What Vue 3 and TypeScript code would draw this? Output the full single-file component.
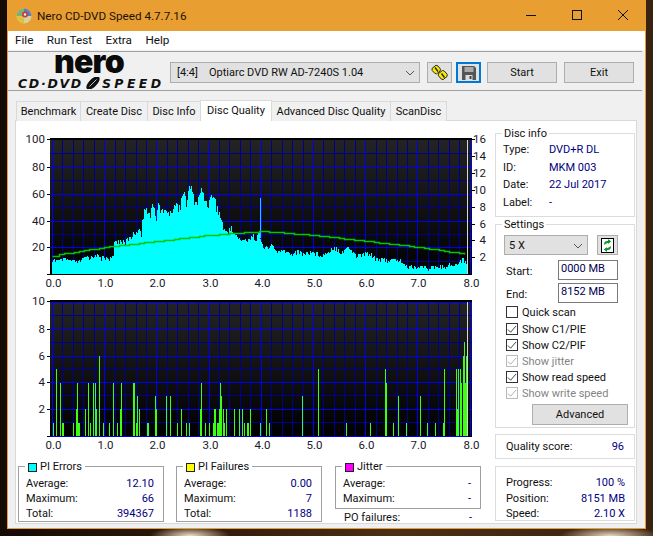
<script setup lang="ts">
type P = [number, number]

const menus = ['File', 'Run Test', 'Extra', 'Help']
const tabs = ['Benchmark', 'Create Disc', 'Disc Info', 'Disc Quality', 'Advanced Disc Quality', 'ScanDisc']

const x0 = 52
const unitX = 52.2
const major = [0, 1, 2, 3, 4, 5, 6, 7, 8].map((v) => Math.round(x0 + v * unitX) + 0.5)
const minorX: number[] = []
for (let i = 0; i <= 40; i++) if (i % 5) minorX.push(Math.round(x0 + i * 10.44) + 0.5)

function lerp(pts: P[], x: number): number {
  for (let i = 1; i < pts.length; i++) {
    if (x <= pts[i][0]) {
      const [a, b] = pts[i - 1]
      const [c, d] = pts[i]
      return b + ((d - b) * (x - a)) / Math.max(c - a, 0.01)
    }
  }
  return pts[pts.length - 1][1]
}

const zoomA: P[] = [
  [125, 403], [135, 398], [145, 405], [160, 398], [185, 404], [205, 408], [215, 402], [230, 392], [250, 393], [258, 380], [270, 394],
  [300, 394], [311, 393], [312, 346], [340, 342], [345, 356], [350, 338], [365, 332], [370, 320], [380, 322], [385, 305], [395, 322],
  [397, 272], [410, 230], [414, 250], [420, 262], [430, 230], [440, 265], [445, 230], [460, 258], [470, 244], [480, 262], [490, 236],
  [500, 232], [510, 238], [520, 186], [530, 226], [537, 182], [545, 182], [550, 205], [560, 230], [575, 186], [590, 226], [598, 222],
  [610, 196], [620, 236], [630, 262], [640, 298], [650, 318], [665, 293], [670, 318], [685, 336], [700, 344], [720, 342], [740, 328], [750, 312],
]
const zoomB: P[] = [
  [0, 336], [10, 328], [20, 336], [28, 313], [33, 348], [45, 360], [55, 368], [67, 354], [75, 372], [90, 378], [105, 372], [120, 384],
  [145, 374], [165, 384], [180, 376], [220, 386], [250, 364], [265, 366], [275, 380], [290, 364], [300, 366], [320, 388], [360, 379],
  [378, 396], [410, 401], [450, 401], [470, 420], [550, 423], [600, 415], [625, 415], [640, 391], [645, 406], [652, 406],
]
const envelope: P[] = [
  ...zoomA.map(([x, y]): P => [10 + x / 3, 125 + y / 3]).filter(([x]) => x < 250),
  ...zoomB.map(([x, y]): P => [250 + x / 3, 125 + y / 3]),
]
function noise(i: number): number {
  const s = Math.sin(i * 12.9898) * 43758.5453
  return s - Math.floor(s)
}
let piePath = ''
for (let x = 52; x < 467; x++) {
  const dense = x > 140 && x < 235
  const n = noise(x)
  const amp = dense ? 9 : x < 120 ? 5 : 5
  const top = Math.min(273, Math.round(lerp(envelope, x + 0.5) + n * n * amp))
  piePath += `M${x} 274V${top}h1V274z`
}

const speedPts: P[] = [
  [52, 256], [60, 254], [104, 247], [156, 241], [208, 235], [261, 231], [275, 232], [313, 235], [365, 241], [418, 247], [465, 254],
]
let speedPath = 'M52.5 256.5'
for (let x = 54; x <= 465; x += 5) {
  speedPath += `H${x}.5V${Math.round(lerp(speedPts, x))}.5`
}

const yLeftA = [
  { v: '100', y: 139 }, { v: '80', y: 167 }, { v: '60', y: 194 }, { v: '40', y: 221 }, { v: '20', y: 247 },
]
const yRightA = [16, 14, 12, 10, 8, 6, 4, 2].map((v, i) => ({ v, y: Math.round(139 + i * 16.9) }))
const hMajorA = [167, 194, 221, 247]
const hMinorA = [153, 180, 207, 234, 261]
const yLeftB = [
  { v: '10', y: 301 }, { v: '8', y: 329 }, { v: '6', y: 356 }, { v: '4', y: 382 }, { v: '2', y: 409 },
]
const hMajorB = [302, 329, 356, 382, 409]
const hMinorB = [315, 342, 369, 395, 422]

const barsZ1: [number, number, number?][] = [
  [130, 1], [139, 5], [151, 4], [158, 1, 2], [190, 1], [200, 2, 2], [202, 4], [205, 1, 2], [226, 2], [235, 4], [241, 1], [250, 4], [256, 4],
  [259, 2], [268, 6], [280, 1], [298, 1], [310, 4], [322, 1], [332, 2, 2], [334, 4], [371, 4, 2], [379, 1, 2], [382, 3], [388, 2], [413, 1, 2],
  [436, 3], [438, 2], [469, 3], [481, 3], [502, 1], [514, 2], [529, 1], [538, 1], [571, 2], [574, 4], [586, 1], [598, 1], [610, 1, 2], [613, 2, 2],
  [622, 1, 3], [628, 2, 2], [631, 4], [634, 3], [640, 2], [643, 1], [649, 2], [673, 2], [688, 2], [697, 2], [703, 1], [712, 1, 2], [721, 2],
]
const barsZ2: [number, number, number?][] = [
  [31, 1], [49, 2], [58, 1], [157, 3], [205, 5], [289, 1], [361, 1], [406, 5], [409, 4], [430, 1], [445, 3], [469, 1], [511, 3], [532, 1], [556, 1],
  [580, 1, 2], [583, 5], [619, 5], [621, 2, 2], [625, 5], [631, 5], [634, 4], [640, 6, 2], [643, 7], [646, 4, 2], [649, 6], [652, 2],
]
const uy = 13.37
const c2Bars = [
  ...barsZ1.map(([x, v, w]) => ({ x: 10 + x / 3 - 0.5, v, w: w ?? 1 })),
  ...barsZ2.map(([x, v, w]) => ({ x: 250 + x / 3 - 0.5, v, w: w ?? 1 })),
]
let pifPath = ''
for (const b of c2Bars) {
  pifPath += `M${Math.round(b.x)} 436V${Math.round(436 - b.v * uy)}h${b.w}V436z`
}

const stats = [
  { title: 'PI Errors', color: '#00ffff', avg: '12.10', max: '66', total: '394367' },
  { title: 'PI Failures', color: '#ffff00', avg: '0.00', max: '7', total: '1188' },
]
const discInfo = [
  ['Type:', 'DVD+R DL'],
  ['ID:', 'MKM 003'],
  ['Date:', '22 Jul 2017'],
  ['Label:', '-'],
]
const checks = [
  { label: 'Show C1/PIE', on: true, off: false },
  { label: 'Show C2/PIF', on: true, off: false },
  { label: 'Show jitter', on: true, off: true },
  { label: 'Show read speed', on: true, off: false },
  { label: 'Show write speed', on: true, off: true },
]
const progress = [
  ['Progress:', '100 %'],
  ['Position:', '8151 MB'],
  ['Speed:', '2.10 X'],
]
</script>

<template>
  <div class="page">
    <div class="window">
      <header class="titlebar">
        <svg class="app-icon" width="16" height="16" viewBox="0 0 16 16">
          <circle cx="8" cy="8" r="7.5" fill="#d8d0a0" />
          <path d="M8 .5A7.5 7.5 0 0 1 15.5 8H8z" fill="#5a7fc0" />
          <path d="M.5 8A7.5 7.5 0 0 1 8 .5V8z" fill="#7fb070" />
          <path d="M8 15.5A7.5 7.5 0 0 1 .5 8H8z" fill="#e0c040" />
          <circle cx="9" cy="6.5" r="3" fill="#c04040" />
          <circle cx="9" cy="6.5" r="1.2" fill="#eee" />
        </svg>
        <span class="title-text">Nero CD-DVD Speed 4.7.7.16</span>
        <div class="win-controls">
          <svg width="46" height="31" viewBox="0 0 46 31"><path d="M18 15.5h10" stroke="#111" fill="none" /></svg>
          <svg width="46" height="31" viewBox="0 0 46 31"><rect x="18.5" y="10.5" width="9" height="9" stroke="#111" fill="none" /></svg>
          <svg width="46" height="31" viewBox="0 0 46 31"><path d="M18 10l10 10M28 10L18 20" stroke="#111" fill="none" /></svg>
        </div>
      </header>

      <nav class="menubar">
        <span v-for="m in menus" :key="m" class="menu-item">{{ m }}</span>
      </nav>

      <section class="toolbar">
        <div class="logo">
          <div class="logo-nero">nero</div>
          <div class="logo-line">
            <span class="logo-cd">CD·DVD</span>
            <svg width="16" height="12" viewBox="0 0 16 12">
              <ellipse cx="8" cy="6" rx="8.5" ry="4" transform="rotate(-45 8 6)" fill="#111" />
              <path d="M4.5 9.5L11.5 2.5" stroke="#eee" stroke-width="0.8" />
            </svg>
            <span class="logo-speed">SPEED</span>
          </div>
        </div>
        <div class="combo drive">
          <span class="drive-id">[4:4]</span>
          <span>Optiarc DVD RW AD-7240S 1.04</span>
          <svg class="chev" width="10" height="6" viewBox="0 0 10 6"><path d="M1 1l4 4 4-4" stroke="#555" fill="none" /></svg>
        </div>
        <button class="tool-btn">
          <svg width="17" height="17" viewBox="0 0 17 17">
            <path d="M1 4.5L5 1.2l2 .8 2.5 3.2-.5 2-3.5 2.6-1.6-.4L1.2 6.5z" fill="#f7ea10" stroke="#2a2a10" stroke-width="1" />
            <path d="M7.5 9.5l4-3 1.8.5 3 3.5-.3 2-3.8 3-1.8-.3-3-3.5z" fill="#f7ea10" stroke="#2a2a10" stroke-width="1" />
            <path d="M4 3.5l3 4M10.5 9.5l3 4" stroke="#2a2a10" stroke-width="1.4" />
          </svg>
        </button>
        <button class="tool-btn save">
          <svg width="14" height="14" viewBox="0 0 14 14">
            <path d="M0 0h12l2 2v12H0z" fill="#555" />
            <rect x="2.5" y="1" width="9" height="5" fill="#aaa" />
            <rect x="3.5" y="9" width="7" height="5" fill="#ddd" />
            <rect x="7.5" y="10" width="2" height="3" fill="#444" />
          </svg>
        </button>
        <button class="wide-btn start">Start</button>
        <button class="wide-btn">Exit</button>
      </section>

      <div class="tabs">
        <div v-for="t in tabs" :key="t" class="tab" :class="{ active: t === 'Disc Quality' }">{{ t }}</div>
      </div>

      <main class="panel">
        <div class="left-col">
          <svg class="chart" width="479" height="167" viewBox="16 125 479 167">
            <defs>
              <linearGradient id="plotBg" x1="0" y1="0" x2="0" y2="1">
                <stop offset="0" stop-color="#242424" />
                <stop offset="1" stop-color="#000" />
              </linearGradient>
            </defs>
            <rect x="50" y="138" width="422" height="137" fill="url(#plotBg)" />
            <rect x="50" y="138" width="422" height="2" fill="#000" />
            <path v-for="x in minorX" :key="x" :d="`M${x} 140V274`" stroke="#000090" fill="none" />
            <path v-for="y in hMinorA" :key="y" :d="`M50 ${y + 0.5}H472`" stroke="#000090" fill="none" />
            <path v-for="x in major" :key="x" :d="`M${x} 140V274`" stroke="#0000f0" fill="none" />
            <path v-for="y in hMajorA" :key="y" :d="`M50 ${y + 0.5}H472`" stroke="#0000f0" fill="none" />
            <path :d="piePath" fill="#00ffff" />
            <rect x="260" y="198" width="1" height="40" fill="#20c8f0" />
            <path :d="speedPath" stroke="#00c800" stroke-width="1.5" fill="none" />
            <path d="M467.5 140V274" stroke="#d8d8d8" fill="none" />
            <g v-for="t in yLeftA" :key="t.v">
              <path :d="`M47 ${t.y + 0.5}h3`" stroke="#000" fill="none" />
              <text class="axis" x="45" :y="t.y + 4" text-anchor="end">{{ t.v }}</text>
            </g>
            <path d="M47 274.5h3" stroke="#000" fill="none" />
            <g v-for="t in yRightA" :key="t.v">
              <path :d="`M472 ${t.y + 0.5}h3`" stroke="#000" fill="none" />
              <text class="axis" x="486" :y="t.y + 4" text-anchor="end">{{ t.v }}</text>
            </g>
            <text v-for="(x, i) in major" :key="x" class="axis" :x="x + 1" y="287" text-anchor="middle">{{ i.toFixed(1) }}</text>
          </svg>

          <svg class="chart" width="479" height="160" viewBox="16 292 479 160">
            <rect x="50" y="300" width="422" height="137" fill="url(#plotBg)" />
            <rect x="50" y="300" width="422" height="2" fill="#000" />
            <path v-for="x in minorX" :key="x" :d="`M${x} 302V436`" stroke="#000090" fill="none" />
            <path v-for="y in hMinorB" :key="y" :d="`M50 ${y + 0.5}H472`" stroke="#000090" fill="none" />
            <path v-for="x in major" :key="x" :d="`M${x} 302V436`" stroke="#0000f0" fill="none" />
            <path v-for="y in hMajorB" :key="y" :d="`M50 ${y + 0.5}H472`" stroke="#0000f0" fill="none" />
            <path d="M50 436.5H468" stroke="#0000f0" fill="none" />
            <path :d="pifPath" fill="#3cff14" />
            <path d="M467.5 302V436" stroke="#d8d8d8" fill="none" />
            <g v-for="t in yLeftB" :key="t.v">
              <path :d="`M47 ${t.y + 0.5}h3`" stroke="#000" fill="none" />
              <text class="axis" x="45" :y="t.y + 4" text-anchor="end">{{ t.v }}</text>
            </g>
            <path d="M47 436.5h3" stroke="#000" fill="none" />
            <text v-for="(x, i) in major" :key="x" class="axis" :x="x + 1" y="449" text-anchor="middle">{{ i.toFixed(1) }}</text>
          </svg>

          <div class="stats">
            <div v-for="s in stats" :key="s.title" class="stat-box">
              <div class="legend"><i class="swatch" :style="{ background: s.color }"></i>{{ s.title }}</div>
              <div class="row"><span>Average:</span><b>{{ s.avg }}</b></div>
              <div class="row"><span>Maximum:</span><b>{{ s.max }}</b></div>
              <div class="row"><span>Total:</span><b>{{ s.total }}</b></div>
            </div>
            <div class="jitter-col">
              <div class="stat-box jitter">
                <div class="legend"><i class="swatch magenta"></i>Jitter</div>
                <div class="row"><span>Average:</span><b>-</b></div>
                <div class="row"><span>Maximum:</span><b>-</b></div>
              </div>
              <div class="row po"><span>PO failures:</span><b>-</b></div>
            </div>
          </div>
        </div>

        <aside class="right-col">
          <div class="group disc-info">
            <div class="legend plain">Disc info</div>
            <div v-for="d in discInfo" :key="d[0]" class="info-row">
              <span>{{ d[0] }}</span><b>{{ d[1] }}</b>
            </div>
          </div>

          <div class="group settings">
            <div class="legend plain">Settings</div>
            <div class="speed-row">
              <div class="combo speed">
                <span>5 X</span>
                <svg class="chev" width="10" height="6" viewBox="0 0 10 6"><path d="M1 1l4 4 4-4" stroke="#555" fill="none" /></svg>
              </div>
              <button class="refresh">
                <svg width="13" height="15" viewBox="0 0 13 15">
                  <rect x="0.5" y="0.5" width="12" height="14" fill="#fff" stroke="#000" />
                  <path d="M9.5 3.5H5.5Q3.5 3.5 3.5 6.5M9.5 3.5L7.5 1.8V5.2z" stroke="#0a9a2a" fill="#0a9a2a" />
                  <path d="M3.5 11.5H7.5Q9.5 11.5 9.5 8.5M3.5 11.5L5.5 9.8V13.2z" stroke="#0a9a2a" fill="#0a9a2a" />
                </svg>
              </button>
            </div>
            <div class="field"><label>Start:</label><div class="input">0000 MB</div></div>
            <div class="field end"><label>End:</label><div class="input">8152 MB</div></div>
            <div class="check first">
              <span class="box"></span><span>Quick scan</span>
            </div>
            <div v-for="c in checks" :key="c.label" class="check" :class="{ disabled: c.off }">
              <span class="box">
                <svg width="11" height="11" viewBox="0 0 11 11"><path d="M1 5.5l3 3 6-7" stroke="currentColor" stroke-width="1" fill="none" /></svg>
              </span>
              <span>{{ c.label }}</span>
            </div>
            <button class="advanced">Advanced</button>
          </div>

          <div class="group quality">
            <span>Quality score:</span><b>96</b>
          </div>

          <div class="group progress">
            <div v-for="p in progress" :key="p[0]" class="row"><span>{{ p[0] }}</span><b>{{ p[1] }}</b></div>
          </div>
        </aside>
      </main>
    </div>
  </div>
</template>

<style>
html, body { margin: 0; padding: 0; background: #1a0f06; }
</style>

<style scoped>
.page {
  width: 653px;
  height: 536px;
  box-sizing: border-box;
  padding: 0 7px 7px 7px;
  overflow: hidden;
  display: flex;
  font-family: Roboto, sans-serif;
  font-size: 11px;
  color: #111;
  background:
    radial-gradient(ellipse 40px 10px at 190px 536px, #f0e0c8, transparent),
    radial-gradient(ellipse 50px 10px at 610px 536px, #e8d8c0, transparent),
    linear-gradient(90deg, #150b05 0, #2c1a0a 30%, #4a3015 60%, #3a2210 100%);
}
.window {
  flex: 1;
  display: flex;
  flex-direction: column;
  background: #f0f0f0;
  border: 1px solid #e89e30;
  border-top: 0;
  min-width: 0;
}
.titlebar {
  height: 31px;
  flex: none;
  background: #e89e30;
  display: flex;
  align-items: center;
  padding-left: 8px;
}
.title-text { margin-left: 5px; font-size: 11.7px; color: #1a1208; }
.win-controls { margin-left: auto; display: flex; align-items: center; margin-right: -1px; }
.menubar {
  height: 19px;
  flex: none;
  background: #fff;
  display: flex;
  align-items: center;
  padding-left: 7px;
  gap: 13.5px;
  font-size: 11.7px;
}
.menu-item { line-height: 19px; }
.toolbar {
  margin-top: 1px;
  margin-right: 3px;
  height: 38px;
  flex: none;
  border-top: 1px solid #a0a0a0;
  border-bottom: 1px solid #a0a0a0;
  display: flex;
  align-items: flex-start;
  padding-left: 10px;
}
.logo { width: 152px; flex: none; padding-top: 1px; }
.logo-nero {
  font: 900 32px/17px Inter, sans-serif;
  letter-spacing: -0.8px;
  color: #0a0a0a;
  margin-left: 36px;
}
.logo-line {
  margin-top: 7px;
  display: flex;
  align-items: center;
  font: italic 700 12.5px/11px "DejaVu Sans", sans-serif;
  letter-spacing: 1.7px;
  color: #111;
}
.logo-cd { margin-right: 2px; }
.logo-speed { letter-spacing: 3.4px; margin-left: 1px; }
.combo {
  box-sizing: border-box;
  background: #e1e1e1;
  border: 1px solid #adadad;
  display: flex;
  align-items: center;
  position: relative;
}
.drive {
  width: 250px;
  height: 21px;
  margin-top: 10px;
  padding-left: 6px;
}
.drive-id { width: 32px; flex: none; }
.chev { position: absolute; right: 4px; top: 7px; }
.tool-btn {
  width: 25px;
  height: 21px;
  margin: 10px 0 0 7px;
  padding: 0;
  box-sizing: border-box;
  border: 1px solid #adadad;
  background: #e1e1e1;
  display: flex;
  align-items: center;
  justify-content: center;
}
.tool-btn.save { margin-left: 4px; border: 2px solid #0078d7; }
.wide-btn {
  width: 70px;
  height: 21px;
  margin: 10px 0 0 7px;
  box-sizing: border-box;
  border: 1px solid #adadad;
  background: #e1e1e1;
  font: inherit;
  color: #111;
  padding: 0;
}
.wide-btn.start { margin-left: 6px; }
.tabs {
  display: grid;
  grid-template-columns: 65px 67px 53px 71px 119px 56px;
  width: max-content;
  height: 21px;
  margin: 9px 0 0 8px;
  position: relative;
  z-index: 1;
  align-items: end;
}
.tab {
  box-sizing: border-box;
  height: 20px;
  text-align: center;
  border: 1px solid #d9d9d9;
  border-left-width: 0;
  border-bottom: 0;
  line-height: 19px;
  background: #f0f0f0;
  white-space: nowrap;
}
.tab:first-child { border-left-width: 1px; }
.tab.active {
  height: 21px;
  background: #fff;
  border-left-width: 1px;
  margin-left: -1px;
  line-height: 19px;
}
.panel {
  margin: -1px 8px 0 7px;
  height: 404px;
  box-sizing: border-box;
  flex: none;
  background: #fff;
  border: 1px solid #d9d9d9;
  display: flex;
  padding-top: 4px;
}
.left-col { width: 479px; flex: none; }
.chart { display: block; }
.axis { font: 11.5px Roboto, sans-serif; fill: #1a1a2a; }
.stats { display: flex; padding-left: 2px; margin-top: 14px; gap: 12px; }
.stat-box {
  box-sizing: border-box;
  width: 146px;
  height: 56px;
  border: 1px solid #a0a0a0;
  padding: 9px 9px 0 7px;
  position: relative;
}
.jitter-col { width: 146px; margin-left: 1px; }
.jitter { height: 43px; }
.legend {
  position: absolute;
  left: 6px;
  top: -8px;
  background: #fff;
  padding: 0 3px;
  line-height: 16px;
  display: flex;
  align-items: center;
  gap: 3px;
  white-space: nowrap;
}
.legend.plain { left: 6px; top: -8px; padding: 0 2px; }
.swatch {
  width: 7px;
  height: 7px;
  border: 1px solid #222;
  display: block;
}
.swatch.magenta { background: #ff00ff; }
.row { display: flex; justify-content: space-between; height: 15px; line-height: 15px; }
.row b, .info-row b, .quality b { font-weight: 400; color: #000080; }
.po { padding: 1px 9px 0 9px; }
.right-col {
  width: 140px;
  margin-top: 8px;
  display: flex;
  flex-direction: column;
}
.group {
  box-sizing: border-box;
  border: 1px solid #dcdcdc;
  position: relative;
  width: 140px;
}
.disc-info { height: 84px; padding: 7px 0 0 7px; }
.info-row { display: grid; grid-template-columns: 46px 1fr; height: 17.7px; line-height: 17.7px; }
.settings { height: 204px; margin-top: 7px; padding: 10px 0 0 8px; }
.speed-row { display: flex; gap: 9px; }
.speed { width: 84px; height: 20px; padding-left: 4px; }
.refresh {
  width: 21px;
  height: 20px;
  padding: 0;
  box-sizing: border-box;
  border: 1px solid #adadad;
  background: #e1e1e1;
  display: flex;
  align-items: center;
  justify-content: center;
}
.field { display: flex; align-items: center; margin-top: 5px; padding-left: 2px; }
.field.end { margin-top: 3px; }
.field label { width: 52px; padding-top: 3px; }
.input {
  box-sizing: border-box;
  width: 60px;
  height: 20px;
  border: 1px solid #7a7a7a;
  background: #fff;
  line-height: 16px;
  padding-left: 2px;
  color: #000050;
}
.check {
  display: flex;
  align-items: center;
  height: 16px;
  padding-left: 2px;
  gap: 4px;
  white-space: nowrap;
}
.check.first { margin-top: 1px; margin-bottom: 1px; }
.box {
  box-sizing: border-box;
  width: 12px;
  height: 12px;
  border: 1px solid #333;
  background: #fff;
  color: #333;
  display: flex;
  align-items: center;
  justify-content: center;
}
.check.disabled { color: #838383; }
.check.disabled .box { border-color: #bcbcbc; color: #a8a8a8; }
.advanced {
  display: block;
  width: 96px;
  height: 21px;
  margin: 3px 0 0 28px;
  box-sizing: border-box;
  border: 1px solid #adadad;
  background: #e1e1e1;
  font: inherit;
  color: #111;
  padding: 0;
}
.quality {
  height: 25px;
  margin-top: 6px;
  display: flex;
  justify-content: space-between;
  align-items: center;
  padding: 0 10px;
}
.progress { height: 55px; margin-top: 7px; padding: 8px 9px 0 10px; }
.progress .row { height: 15.5px; line-height: 15.5px; }
</style>
